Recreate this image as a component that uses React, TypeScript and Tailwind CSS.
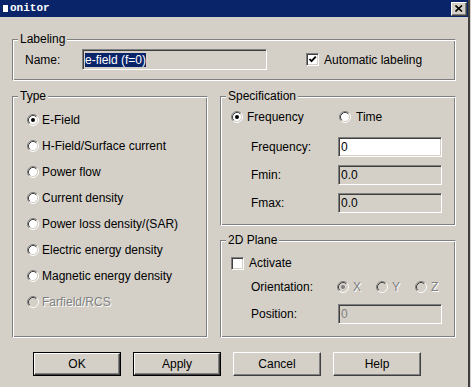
import type { ReactNode } from 'react'

const face = "font-['Liberation_Sans',Arial,sans-serif]"

function Radio({ checked = false, disabled = false }: { checked?: boolean; disabled?: boolean }) {
  return (
    <svg width="12" height="12" viewBox="0 0 12 12" className="shrink-0">
      <circle cx="6" cy="6" r="4.5" fill={disabled ? '#d4d0c8' : '#fff'} />
      <path d="M2.11 9.89 A5.5 5.5 0 0 1 9.89 2.11" stroke="#808080" fill="none" />
      <path d="M9.89 2.11 A5.5 5.5 0 0 1 2.11 9.89" stroke="#fff" fill="none" />
      <path d="M2.82 9.18 A4.5 4.5 0 0 1 9.18 2.82" stroke="#404040" fill="none" />
      <path d="M9.18 2.82 A4.5 4.5 0 0 1 2.82 9.18" stroke="#d4d0c8" fill="none" />
      {checked && <circle cx="6" cy="6" r="2" fill={disabled ? '#808080' : '#000'} />}
    </svg>
  )
}

function Check({ checked = false }: { checked?: boolean }) {
  return (
    <div className="w-[13px] h-[13px] shrink-0 bg-white border border-t-[#808080] border-l-[#808080] border-b-white border-r-white shadow-[inset_1px_1px_0_#404040,inset_-1px_-1px_0_#d4d0c8] flex items-center justify-center">
      {checked && (
        <svg width="9" height="9" viewBox="0 0 9 9">
          <path d="M1.5 4 L3.5 6.2 L7.8 1.6" stroke="#000" strokeWidth="1.8" fill="none" />
        </svg>
      )}
    </div>
  )
}

function Field({ children, white = false, disabled = false, w = 'w-[104px]', h = 'h-[20px]' }: { children?: ReactNode; white?: boolean; disabled?: boolean; w?: string; h?: string }) {
  return (
    <div
      className={`${w} ${h} ${white ? 'bg-white' : 'bg-[#d4d0c8]'} ${disabled ? 'text-[#808080]' : 'text-black'} border border-t-[#808080] border-l-[#808080] border-b-white border-r-white shadow-[inset_1px_1px_0_#404040,inset_-1px_-1px_0_#d4d0c8] flex items-center pl-[2px] text-[12px]`}
    >
      {children}
    </div>
  )
}

function Group({ title, className, children }: { title: string; className: string; children: ReactNode }) {
  return (
    <fieldset className={`${className} border border-t-[#808080] border-l-[#808080] border-b-white border-r-white shadow-[inset_1px_1px_0_#fff,inset_-1px_-1px_0_#808080] p-0 m-0 min-w-0`}>
      <legend className="ml-[5px] px-[2px] bg-[#d4d0c8] leading-[14px] text-[12px] text-black">{title}</legend>
      {children}
    </fieldset>
  )
}

function Button({ label, framed = false }: { label: string; framed?: boolean }) {
  return (
    <div className={`w-[88px] h-[24px] ${framed ? 'border border-black' : ''}`}>
      <div className="w-full h-full border border-t-white border-l-white border-b-[#404040] border-r-[#404040] shadow-[inset_-1px_-1px_0_#808080] flex items-center justify-center text-[12px] text-black">
        {label}
      </div>
    </div>
  )
}

const types = [
  'E-Field',
  'H-Field/Surface current',
  'Power flow',
  'Current density',
  'Power loss density/(SAR)',
  'Electric energy density',
  'Magnetic energy density',
]

export default function App() {
  return (
    <div className={`${face} w-[471px] h-[387px] flex bg-[#d4d0c8] text-[12px] select-none`}>
      <div className="w-[468px] h-full flex flex-col">
        {/* title bar */}
        <div className="h-[17px] bg-[#0a246a] flex items-center justify-between">
          <div className="flex items-center pl-[3px]">
            <div className="w-[5px] h-[7px] bg-white" />
            <span className="ml-[2px] font-['Liberation_Mono',monospace] font-bold text-[11px] leading-[11px] text-white">onitor</span>
          </div>
          <div className="w-[16px] h-[14px] mr-[1px] bg-[#d4d0c8] border border-t-white border-l-white border-b-[#404040] border-r-[#404040] shadow-[inset_-1px_-1px_0_#808080] flex items-center justify-center">
            <svg width="8" height="7" viewBox="0 0 8 7">
              <path d="M0.5 0.5 L7 6.5 M7 0.5 L0.5 6.5" stroke="#000" strokeWidth="1.6" />
            </svg>
          </div>
        </div>

        <div className="flex flex-col px-[12px]">
          {/* Labeling */}
          <Group title="Labeling" className="mt-[15px] w-[444px] h-[49px]">
            <div className="flex items-center pl-[12px] pt-[3px]">
              <span className="w-[57px]">Name:</span>
              <Field w="w-[185px]" h="h-[21px]">
                <span className="bg-[#0a246a] text-white leading-[14px]">e-field (f=0)</span>
              </Field>
              <div className="ml-[39px] flex items-center gap-[5px]">
                <Check checked />
                <span>Automatic labeling</span>
              </div>
            </div>
          </Group>

          <div className="flex gap-[12px] mt-[8px]">
            {/* Type */}
            <Group title="Type" className="w-[196px] h-[249px]">
              <div className="flex flex-col pl-[14px] pt-[4px]">
                {types.map((t, i) => (
                  <div key={t} className="h-[26px] flex items-center gap-[3px]">
                    <Radio checked={i === 0} />
                    <span>{t}</span>
                  </div>
                ))}
                <div className="h-[26px] flex items-center gap-[3px]">
                  <Radio disabled />
                  <span className="text-[#808080] [text-shadow:1px_1px_0_#fff]">Farfield/RCS</span>
                </div>
              </div>
            </Group>

            <div className="flex flex-col w-[236px]">
              {/* Specification */}
              <Group title="Specification" className="w-[236px] h-[137px]">
                <div className="flex flex-col pt-[4px]">
                  <div className="h-[20px] flex items-center pl-[10px]">
                    <div className="w-[108px] flex items-center gap-[4px]">
                      <Radio checked />
                      <span>Frequency</span>
                    </div>
                    <div className="flex items-center gap-[5px]">
                      <Radio />
                      <span>Time</span>
                    </div>
                  </div>
                  <div className="flex flex-col gap-[8px] mt-[10px] pl-[30px]">
                    <div className="flex items-center">
                      <span className="w-[87px]">Frequency:</span>
                      <Field white>0</Field>
                    </div>
                    <div className="flex items-center">
                      <span className="w-[87px]">Fmin:</span>
                      <Field>0.0</Field>
                    </div>
                    <div className="flex items-center">
                      <span className="w-[87px]">Fmax:</span>
                      <Field>0.0</Field>
                    </div>
                  </div>
                </div>
              </Group>

              {/* 2D Plane */}
              <Group title="2D Plane" className="mt-[7px] w-[236px] h-[105px]">
                <div className="flex flex-col pt-[8px]">
                  <div className="h-[16px] flex items-center gap-[5px] pl-[10px]">
                    <Check />
                    <span>Activate</span>
                  </div>
                  <div className="h-[20px] mt-[6px] flex items-center pl-[30px]">
                    <span className="w-[86px]">Orientation:</span>
                    {['X', 'Y', 'Z'].map((a, i) => (
                      <div key={a} className="w-[39px] flex items-center gap-[4px]">
                        <Radio checked={i === 0} disabled />
                        <span className="text-[#808080] [text-shadow:1px_1px_0_#fff]">{a}</span>
                      </div>
                    ))}
                  </div>
                  <div className="flex items-center mt-[7px] pl-[30px]">
                    <span className="w-[87px]">Position:</span>
                    <Field disabled>0</Field>
                  </div>
                </div>
              </Group>
            </div>
          </div>

          {/* buttons */}
          <div className="flex gap-[12px] ml-[21px] mt-[14px]">
            <Button label="OK" framed />
            <Button label="Apply" framed />
            <Button label="Cancel" />
            <Button label="Help" />
          </div>
        </div>
      </div>
      <div className="w-[2px] h-full bg-[#404040]" />
      <div className="w-[1px] h-full bg-[#d4d0c8]" />
    </div>
  )
}
